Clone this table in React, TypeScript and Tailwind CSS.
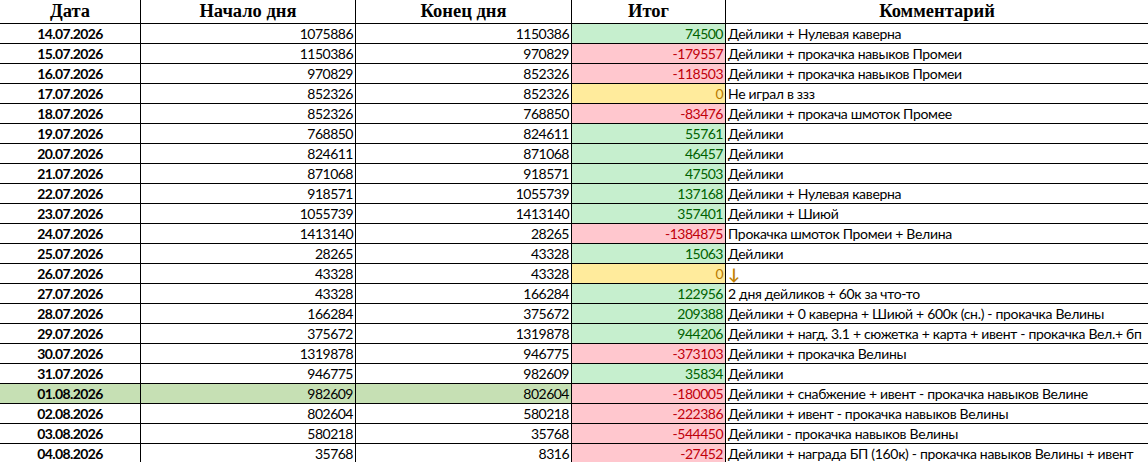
import React from 'react';

type Row = {
  date: string;
  start: number;
  end: number;
  comment: string;
  highlight?: boolean;
};

const rows: Row[] = [
  { date: '14.07.2026', start: 1075886, end: 1150386, comment: 'Дейлики + Нулевая каверна' },
  { date: '15.07.2026', start: 1150386, end: 970829, comment: 'Дейлики + прокачка навыков Промеи' },
  { date: '16.07.2026', start: 970829, end: 852326, comment: 'Дейлики + прокачка навыков Промеи' },
  { date: '17.07.2026', start: 852326, end: 852326, comment: 'Не играл в ззз' },
  { date: '18.07.2026', start: 852326, end: 768850, comment: 'Дейлики + прокача шмоток Промее' },
  { date: '19.07.2026', start: 768850, end: 824611, comment: 'Дейлики' },
  { date: '20.07.2026', start: 824611, end: 871068, comment: 'Дейлики' },
  { date: '21.07.2026', start: 871068, end: 918571, comment: 'Дейлики' },
  { date: '22.07.2026', start: 918571, end: 1055739, comment: 'Дейлики + Нулевая каверна' },
  { date: '23.07.2026', start: 1055739, end: 1413140, comment: 'Дейлики + Шиюй' },
  { date: '24.07.2026', start: 1413140, end: 28265, comment: 'Прокачка шмоток Промеи + Велина' },
  { date: '25.07.2026', start: 28265, end: 43328, comment: 'Дейлики' },
  { date: '26.07.2026', start: 43328, end: 43328, comment: '↓' },
  { date: '27.07.2026', start: 43328, end: 166284, comment: '2 дня дейликов + 60к за что-то' },
  { date: '28.07.2026', start: 166284, end: 375672, comment: 'Дейлики + 0 каверна + Шиюй + 600к (сн.) - прокачка Велины' },
  { date: '29.07.2026', start: 375672, end: 1319878, comment: 'Дейлики + нагд. 3.1 + сюжетка + карта + ивент - прокачка Вел.+ бп' },
  { date: '30.07.2026', start: 1319878, end: 946775, comment: 'Дейлики + прокачка Велины' },
  { date: '31.07.2026', start: 946775, end: 982609, comment: 'Дейлики' },
  { date: '01.08.2026', start: 982609, end: 802604, comment: 'Дейлики + снабжение + ивент - прокачка навыков Велине', highlight: true },
  { date: '02.08.2026', start: 802604, end: 580218, comment: 'Дейлики + ивент - прокачка навыков Велины' },
  { date: '03.08.2026', start: 580218, end: 35768, comment: 'Дейлики - прокачка навыков Велины' },
  { date: '04.08.2026', start: 35768, end: 8316, comment: 'Дейлики + награда БП (160к) - прокачка навыков Велины + ивент' },
];

const headCell =
  'h-6 border-b border-r border-black flex items-center justify-center font-bold text-[18.5px] leading-none [font-family:"Liberation_Serif",serif]';

function resultStyle(v: number) {
  if (v > 0) return 'bg-[#c6efce] text-[#006100]';
  if (v < 0) return 'bg-[#ffc7ce] text-[#c0000a]';
  return 'bg-[#ffeb9c] text-[#b77a00]';
}

export default function App() {
  return (
    <div className="w-[1148px] h-[462px] overflow-hidden bg-white text-black text-[14px] leading-none [font-family:Lato,'Liberation_Sans',sans-serif]">
      <div className="grid grid-cols-[141px_215px_216px_154px_1fr]">
        <div className={headCell}>Дата</div>
        <div className={headCell}>Начало дня</div>
        <div className={headCell}>Конец дня</div>
        <div className={headCell}>Итог</div>
        <div className={`${headCell} border-r-0`}>Комментарий</div>

        {rows.map((r) => {
          const diff = r.end - r.start;
          const hl = r.highlight ? 'bg-[#c6e0b4]' : '';
          return (
            <React.Fragment key={r.date}>
              {/* date */}
              <div className={`h-5 border-b border-r border-black flex items-center justify-center font-bold tracking-[-0.6px] ${hl}`}>
                {r.date}
              </div>
              <div className={`h-5 border-b border-r border-black flex items-center justify-end pr-[2px] tracking-[-0.5px] ${hl}`}>
                {r.start}
              </div>
              <div className={`h-5 border-b border-r border-black flex items-center justify-end pr-[2px] tracking-[-0.5px] ${hl}`}>
                {r.end}
              </div>
              <div className={`h-5 border-b border-r border-black flex items-center justify-end pr-[2px] tracking-[-0.5px] ${resultStyle(diff)}`}>
                {diff}
              </div>
              {/* comment */}
              <div className="h-5 border-b border-black flex items-center pl-[2px] whitespace-nowrap overflow-hidden tracking-[-0.32px]">
                {r.comment === '↓' ? <span className="text-[#c08000] text-[16px] font-bold">↓</span> : r.comment}
              </div>
            </React.Fragment>
          );
        })}
      </div>
    </div>
  );
}
